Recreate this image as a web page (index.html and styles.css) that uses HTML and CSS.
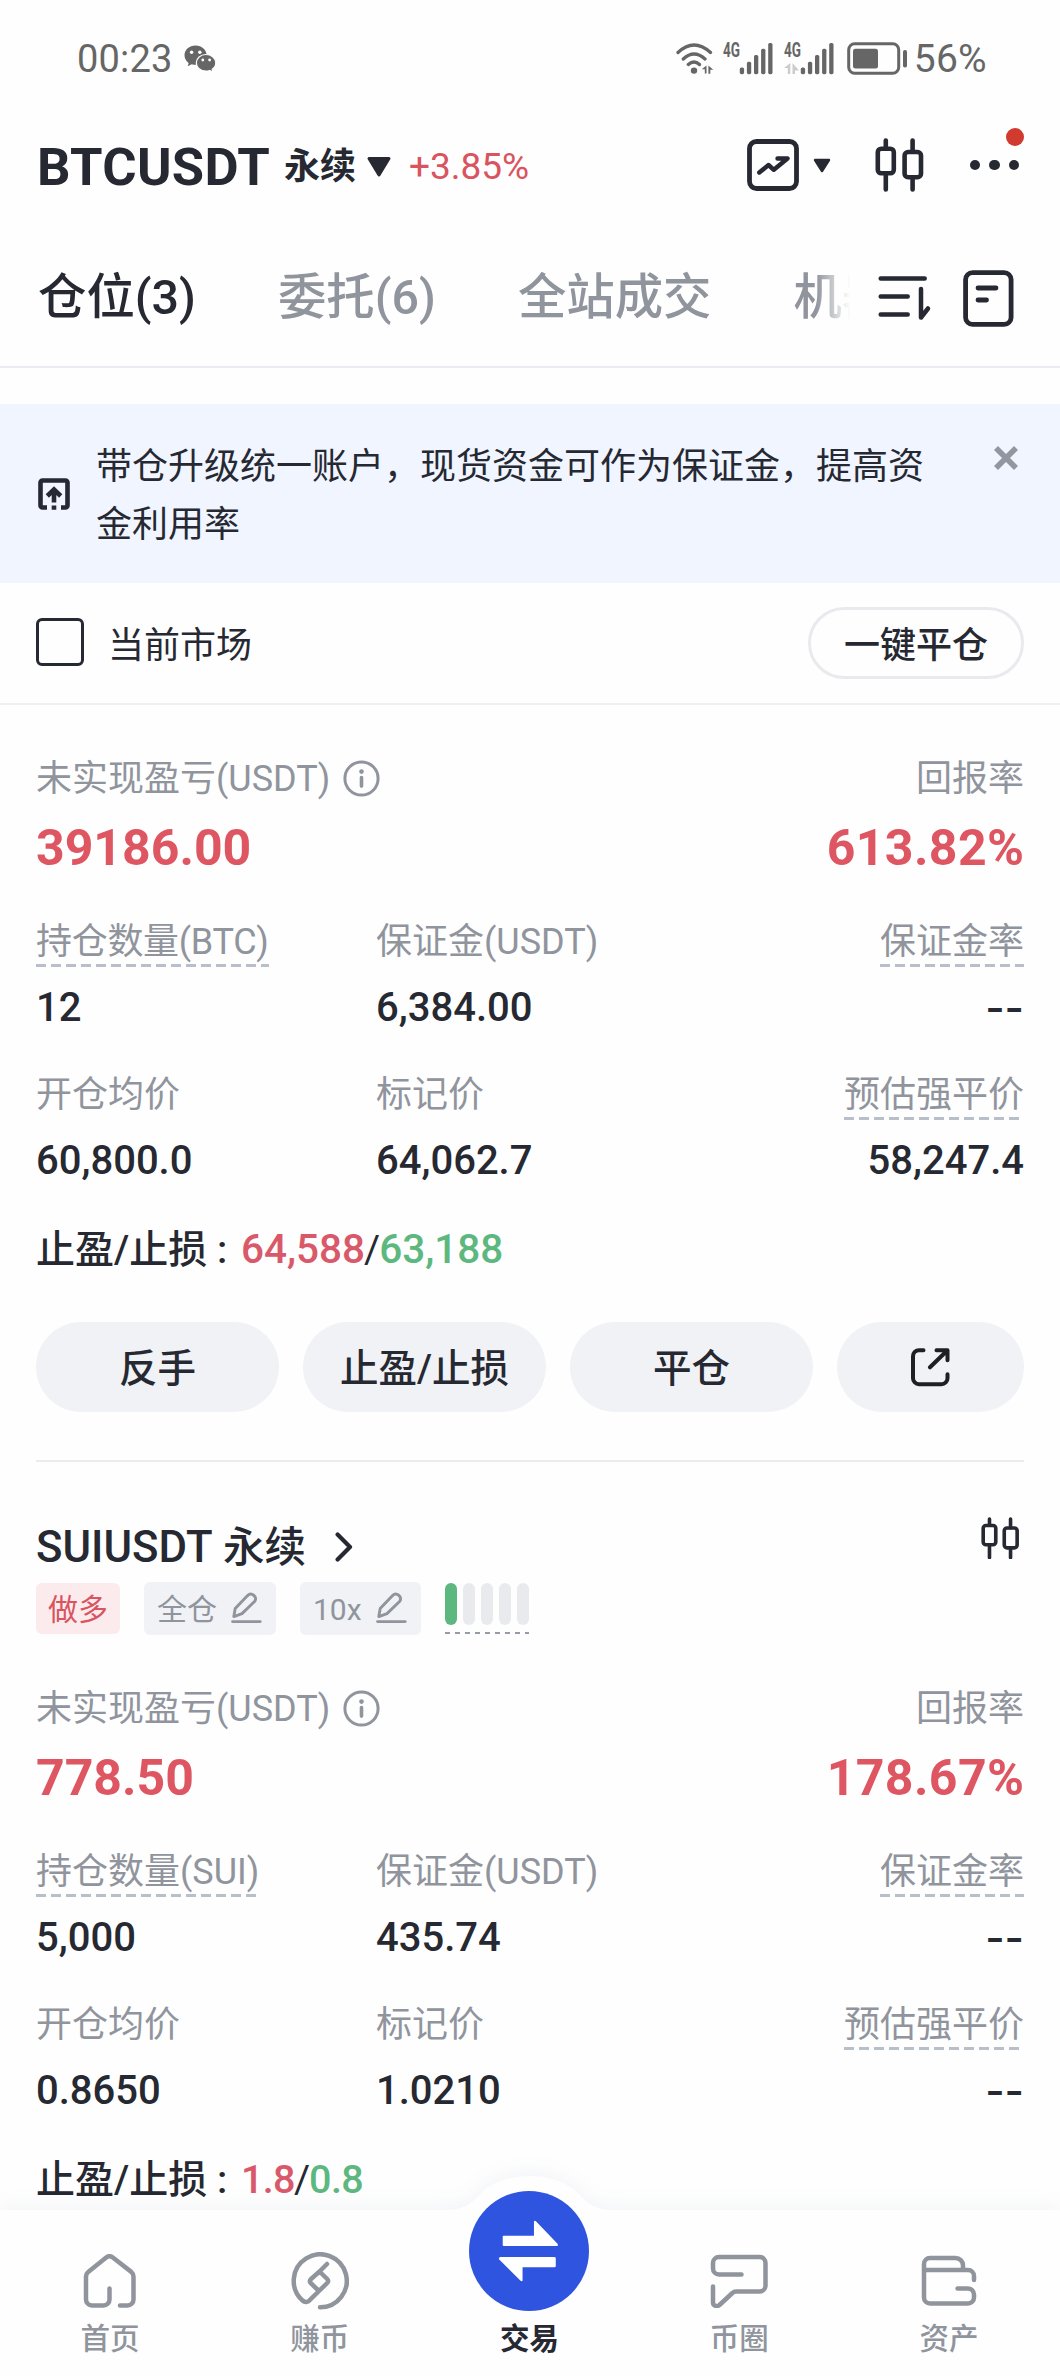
FILE: index.html
```html
<!DOCTYPE html>
<html lang="zh-CN">
<head>
<meta charset="utf-8">
<title>BTCUSDT 永续</title>
<link rel="stylesheet" href="styles.css">
</head>
<body>
<svg class="defs" width="0" height="0">
  <symbol id="candles" viewBox="0 0 49 54">
    <g fill="none" stroke="currentColor" stroke-width="4.6" stroke-linecap="round">
      <rect x="2.8" y="10.7" width="16" height="24.6" rx="3.5"/>
      <path d="M10.8 2.5v8M10.8 35.5v16M37.6 2.5v11M37.6 39.5v12"/>
      <rect x="29.6" y="14" width="16.4" height="25.2" rx="3.5"/>
    </g>
  </symbol>
  <symbol id="info" viewBox="0 0 37 37">
    <circle cx="18.5" cy="18.5" r="16.6" fill="none" stroke="currentColor" stroke-width="3"/>
    <circle cx="18.5" cy="11.6" r="2.3" fill="currentColor"/>
    <path d="M18.5 17.5v8.6" stroke="currentColor" stroke-width="3.6" stroke-linecap="round"/>
  </symbol>
  <symbol id="pencil" viewBox="0 0 31 32">
    <g fill="none" stroke="currentColor" stroke-width="2.9" stroke-linecap="round" stroke-linejoin="round">
      <path d="M2.8 24.6 4.2 16.4 16.6 3.6a4.6 4.6 0 0 1 7.2 5.6L11 21.6z"/>
      <path d="M1.6 29.6h27.6"/>
    </g>
  </symbol>
  <symbol id="bars" viewBox="0 0 51 33">
    <g fill="currentColor">
      <rect x="16.8" y="25.6" width="4.3" height="6.6" rx="1.6"/>
      <rect x="23.9" y="19.8" width="4.3" height="12.4" rx="1.6"/>
      <rect x="31" y="13" width="4.3" height="19.2" rx="1.6"/>
      <rect x="38.1" y="6.7" width="4.3" height="25.5" rx="1.6"/>
      <rect x="45.2" y="1" width="4.3" height="31.2" rx="1.6"/>
    </g>
  </symbol>
</svg>

<div class="screen">
  <div class="status">
    <span class="status-time">00:23</span>
    <svg class="wechat" width="33" height="28" viewBox="0 0 33 28">
      <path fill="#666" d="M11.6.6C5.2.6.5 4.9.5 10.3c0 3.2 1.6 5.9 4.2 7.6L3.7 21.3l4-2.1c1.3.4 2.6.6 3.9.6 6.3 0 11-4.3 11-9.5S17.9.6 11.6.6z"/>
      <path fill="#666" stroke="#fff" stroke-width="1.2" d="M22 9.5c-5.5 0-9.7 3.7-9.7 8.3s4.2 8.3 9.7 8.3c1.2 0 2.5-.2 3.6-.6l3.6 1.8-1-3c2.4-1.5 3.6-3.9 3.6-6.5 0-4.6-4.3-8.3-9.8-8.3z"/>
      <g fill="#fff"><circle cx="7.6" cy="7.2" r="1.7"/><circle cx="15.8" cy="7.2" r="1.7"/><circle cx="18.8" cy="15" r="1.4"/><circle cx="25.6" cy="15" r="1.4"/></g>
    </svg>
    <div class="status-right">
      <svg width="40" height="34" viewBox="0 0 40 34">
        <g fill="none" stroke="#666" stroke-width="3.3" stroke-linecap="round"><path d="M3 10.5Q19 -4.5 35.5 10.5M8.3 17Q19 7 30 17M13.3 22.5Q19 17.3 24.5 22.5"/></g>
        <circle cx="19" cy="28.6" r="3.2" fill="#666"/>
        <path fill="#666" d="M31.5 23.5v8h-1.700v-4.300h-3zM33.400 23.500l4.900 4.300h-3v4h-1.900z"/>
      </svg>
      <svg class="net" width="51" height="33" viewBox="0 0 51 33"><text x="0" y="15" class="net-label" textLength="17" lengthAdjust="spacingAndGlyphs">4G</text><use href="#bars"/></svg>
      <svg class="net" width="51" height="33" viewBox="0 0 51 33"><text x="0" y="15" class="net-label" textLength="17" lengthAdjust="spacingAndGlyphs">4G</text><use href="#bars"/><path fill="#ccc" d="M6.3 21v11H3.8v-6H0zM8.5 21v11H11v-3.5h4z"/></svg>
      <svg class="battery" width="61" height="33" viewBox="0 0 61 33">
        <rect x="1.7" y="1.7" width="50" height="29.6" rx="6" fill="none" stroke="#666" stroke-width="3"/>
        <rect x="6" y="6.7" width="25" height="19.8" rx="2.5" fill="#666"/>
        <rect x="56" y="8" width="4" height="17.5" rx="1.8" fill="#666"/>
      </svg>
      <span class="status-pct">56%</span>
    </div>
  </div>

  <header class="header">
    <h1 class="pair">BTCUSDT</h1>
    <span class="kind">永续</span>
    <svg class="caret" width="26" height="22" viewBox="0 0 26 22"><path d="M3 2.5h20L13 19z" fill="currentColor" stroke="currentColor" stroke-width="3" stroke-linejoin="round"/></svg>
    <span class="change">+3.85%</span>
    <div class="header-icons">
      <svg width="52" height="52" viewBox="0 0 52 52"><g fill="none" stroke="currentColor" stroke-linecap="round" stroke-linejoin="round"><rect x="2.5" y="2.5" width="47" height="47" rx="7" stroke-width="4.8"/><path stroke-width="4.4" d="M12.3 33.5 21.5 26l5.3 4.8L40.5 19.5H30.5"/></g></svg>
      <svg class="caret-sm" width="18" height="16" viewBox="0 0 18 16"><path d="M2 2h14L9 13z" fill="currentColor" stroke="currentColor" stroke-width="2.4" stroke-linejoin="round"/></svg>
      <svg class="candles-lg" width="49" height="54"><use href="#candles"/></svg>
      <span class="more"><i></i><i></i><i></i><b class="badge"></b></span>
    </div>
  </header>

  <div class="tabbar">
    <nav class="tabs">
      <span class="tab active">仓位(3)</span>
      <span class="tab">委托(6)</span>
      <span class="tab">全站成交</span>
      <span class="tab">机器人</span>
    </nav>
    <div class="tab-icons">
      <svg width="54" height="48" viewBox="0 0 54 48"><path d="M2.7 4.5h44M2.7 22.5h27M2.7 40.5h27M43 15v28.5l7-9" fill="none" stroke="currentColor" stroke-width="4.5" stroke-linecap="round" stroke-linejoin="round"/></svg>
      <svg width="51" height="57" viewBox="0 0 51 57"><g fill="none" stroke="currentColor" stroke-width="4.8" stroke-linecap="round"><rect x="2.6" y="2.6" width="45.5" height="51.8" rx="7"/><path d="M15 18h18M15 30h8.5"/></g></svg>
    </div>
  </div>

  <div class="banner">
    <svg class="banner-icon" width="32" height="32" viewBox="0 0 32 32"><g fill="none" stroke="currentColor" stroke-width="4.6"><path d="M9 29.5H4.5a2 2 0 0 1-2-2v-23a2 2 0 0 1 2-2h23a2 2 0 0 1 2 2v23a2 2 0 0 1-2 2H23"/><path d="M9.3 18 16 11.5l6.7 6.5M16 12v12.6M16 27.6v4.2"/></g></svg>
    <p class="banner-text">带仓升级统一账户，现货资金可作为保证金，提高资金利用率</p>
    <svg class="close" width="24" height="24" viewBox="0 0 24 24"><path d="M2 2l20 20M22 2L2 22" stroke="#92969e" stroke-width="5.6"/></svg>
  </div>

  <div class="filter">
    <span class="checkbox"></span>
    <span class="filter-label">当前市场</span>
    <button class="close-all">一键平仓</button>
  </div>

  <main class="positions">
    <section class="position">
      <div class="row head">
        <span class="label">未实现盈亏(USDT)<svg class="info" width="37" height="37"><use href="#info"/></svg></span>
        <span class="label">回报率</span>
      </div>
      <div class="row pnl"><span>39186.00</span><span class="rate">613.82%</span></div>
      <div class="grid">
        <div class="cell"><span class="label hint tight">持仓数量(BTC)</span><span class="value">12</span></div>
        <div class="cell"><span class="label">保证金(USDT)</span><span class="value">6,384.00</span></div>
        <div class="cell"><span class="label hint">保证金率</span><span class="value none">--</span></div>
        <div class="cell"><span class="label">开仓均价</span><span class="value">60,800.0</span></div>
        <div class="cell"><span class="label">标记价</span><span class="value">64,062.7</span></div>
        <div class="cell"><span class="label hint">预估强平价</span><span class="value">58,247.4</span></div>
      </div>
      <div class="tpsl">止盈/止损 : <span class="red">64,588</span><span class="slash">/</span><span class="green">63,188</span></div>
      <div class="actions">
        <button class="action">反手</button>
        <button class="action">止盈/止损</button>
        <button class="action">平仓</button>
        <button class="action share"><svg width="39" height="39" viewBox="0 0 39 39"><g fill="none" stroke="#1f2023" stroke-width="4" stroke-linecap="round" stroke-linejoin="round"><path d="M12.5 2.2H8a6 6 0 0 0-6 6v22a6 6 0 0 0 6 6h22.5a6 6 0 0 0 6-6v-4"/><path d="M25.5 2.2h11v10M36 2.7 19 19.3"/></g></svg></button>
      </div>
    </section>

    <section class="position">
      <div class="title-row">
        <h2 class="name"><span class="symbol">SUIUSDT</span> 永续</h2>
        <svg class="chevron" width="18" height="30" viewBox="0 0 18 30"><path d="M2.6 2.6 15 15 2.6 27.4" fill="none" stroke="currentColor" stroke-width="4.2" stroke-linecap="round" stroke-linejoin="round"/></svg>
        <svg class="candles-sm" width="38.5" height="42.5"><use href="#candles"/></svg>
      </div>
      <div class="tags">
        <span class="tag long">做多</span>
        <span class="tag">全仓<svg width="31" height="32"><use href="#pencil"/></svg></span>
        <span class="tag">10x<svg width="31" height="32"><use href="#pencil"/></svg></span>
        <span class="risk"><i class="on"></i><i></i><i></i><i></i><i></i></span>
      </div>
      <div class="row head">
        <span class="label">未实现盈亏(USDT)<svg class="info" width="37" height="37"><use href="#info"/></svg></span>
        <span class="label">回报率</span>
      </div>
      <div class="row pnl"><span>778.50</span><span class="rate">178.67%</span></div>
      <div class="grid">
        <div class="cell"><span class="label hint">持仓数量(SUI)</span><span class="value">5,000</span></div>
        <div class="cell"><span class="label">保证金(USDT)</span><span class="value">435.74</span></div>
        <div class="cell"><span class="label hint">保证金率</span><span class="value none">--</span></div>
        <div class="cell"><span class="label">开仓均价</span><span class="value">0.8650</span></div>
        <div class="cell"><span class="label">标记价</span><span class="value">1.0210</span></div>
        <div class="cell"><span class="label hint">预估强平价</span><span class="value none">--</span></div>
      </div>
      <div class="tpsl short">止盈/止损 : <span class="red">1.8</span><span class="slash">/</span><span class="green">0.8</span></div>
    </section>
  </main>

  <nav class="bottom">
    <svg class="bottom-bg" width="1060" height="201" viewBox="0 0 1060 201"><path fill="#fefefe" d="M0 35H446C471 35 476 21 487 13 499 5 512 1 529.5 1S560 5 572 13C583 21 588 35 613 35H1060V201H0z"/></svg>
    <a class="item">
      <svg width="54" height="54" viewBox="0 0 54 54"><path d="M37 51.5h7.5a6 6 0 0 0 6-6V22.5a6 6 0 0 0-2.2-4.6L29.5 3.3a5 5 0 0 0-6 0L5.2 17.9A6 6 0 0 0 3 22.5v23a6 6 0 0 0 6 6h11.5a6 6 0 0 0 6-6V34.5"/></svg>
      <span>首页</span>
    </a>
    <a class="item">
      <svg class="coin" width="58" height="58" viewBox="0 0 58 58"><path d="M29 55.3A26.5 26.5 0 1 0 11.5 48.5a5 5 0 0 0 7.200-.3L28 39l8.200-8a3 3 0 0 0 0-4L28.500 19.500 36 12M28.500 19.500 19.800 27.200a3 3 0 0 0 0 4L28 39"/></svg>
      <span>赚币</span>
    </a>
    <a class="item trade">
      <svg class="trade-btn" width="120" height="120" viewBox="0 0 121 121"><circle cx="60.5" cy="60.5" r="60.5" fill="#2f54df"/><path fill="#fff" d="M35 45h30.5V30.5q.8-1 2 0L89.5 53.5V55.5H35q-1 0-1-1v-8.5q0-1 1-1zM31 66.5H86q1.5 0 1.5 1.5v7.5q0 1.5-1.5 1.5H54V90.5q-.8 1-2 0L30 68.5z"/></svg>
      <span>交易</span>
    </a>
    <a class="item">
      <svg width="58" height="54" viewBox="0 0 58 54"><path d="M31.5 20.5H9a6 6 0 0 1-6-6V9a6 6 0 0 1 6-6h40.5a6 6 0 0 1 6 6v22.5a6 6 0 0 1-6 6H26a5 5 0 0 0-3.6 1.5L9.5 51C7 53 3 52 3 48.5V32.5"/></svg>
      <span>币圈</span>
    </a>
    <a class="item">
      <svg width="56" height="54" viewBox="0 0 56 54"><path d="M53 26V22a6 6 0 0 0-6-6H3M42 16V11.5a7.5 7.5 0 0 0-7.5-7.5H9a6 6 0 0 0-6 6v33.5a6 6 0 0 0 6 6h38a6 6 0 0 0 6-6V40.5a6 6 0 0 0-6-6H36.5"/></svg>
      <span>资产</span>
    </a>
  </nav>
</div>
</body>
</html>
```

FILE: styles.css
```css
* { box-sizing: border-box; }

body {
  margin: 0;
  background: #fff;
  color: #262932;
  font-family: Roboto, "Noto Sans CJK SC", sans-serif;
}

h1, h2, p { margin: 0; }
svg { display: block; flex: none; }
.defs { position: absolute; }
button {
  font: inherit;
  color: inherit;
  padding: 0;
  border: 0;
}

.screen {
  width: 1060px;
  height: 2376px;
  display: flex;
  flex-direction: column;
  background: #fefefe;
  overflow: hidden;
}

/* status bar */
.status {
  height: 117px;
  padding: 0 73px 0 77px;
  display: flex;
  align-items: center;
  color: #666;
  font-size: 38px;
  line-height: 44px;
}
.status-time { letter-spacing: 0.2px; }
.status-pct { font-size: 39px; letter-spacing: 0.3px; }
.wechat { margin-left: 11px; }
.status-right { margin-left: auto; display: flex; align-items: center; }
.net { margin-left: 8px; margin-right: 2px; overflow: visible; }
.net-label { font-size: 20px; font-weight: 700; fill: #666; }
.battery { margin: 0 6px 0 10px; }

/* header */
.header {
  height: 96px;
  padding: 0 38px 0 37px;
  display: flex;
  align-items: center;
}
.pair { font-size: 52.5px; font-weight: 700; line-height: 60px; padding-top: 3px; letter-spacing: 0.3px; }
.kind { font-size: 36px; font-weight: 700; line-height: 44px; margin-left: 14px; padding-top: 3px; }
.caret { margin: 4px 0 0 10px; }
.change { font-size: 37px; line-height: 44px; color: #d9545f; margin-left: 17px; padding-top: 3px; }
.header-icons { margin-left: auto; display: flex; align-items: center; }
.caret-sm { margin: 2px 44px 0 14px; }
.more {
  position: relative;
  display: flex;
  gap: 9px;
  margin-left: 46px;
  padding-right: 3px;
}
.more i { width: 10.5px; height: 10.5px; border-radius: 50%; background: #262932; }
.badge {
  position: absolute;
  right: -2px;
  top: -32px;
  width: 18px;
  height: 18px;
  border-radius: 50%;
  background: #d03a2f;
}

/* tabs */
.tabbar {
  height: 155px;
  padding: 17px 46px 0 38px;
  display: flex;
  align-items: center;
  border-bottom: 2px solid #ebecf1;
}
.tabs {
  width: 812px;
  display: flex;
  gap: 82px;
  overflow: hidden;
  white-space: nowrap;
  -webkit-mask-image: linear-gradient(to right, #000 778px, transparent 812px);
  mask-image: linear-gradient(to right, #000 778px, transparent 812px);
}
.tab { font-size: 48.4px; line-height: 64px; font-weight: 500; color: #90949d; flex: none; }
.tab.active { color: #262932; }
.tab-icons { margin-left: auto; display: flex; align-items: center; gap: 31px; }

/* banner */
.banner {
  height: 179px;
  margin-top: 36px;
  padding: 34px 42px 0 38px;
  display: flex;
  align-items: flex-start;
  background: #f0f5ff;
}
.banner-icon { margin-top: 40px; }
.banner-text { width: 830px; margin-left: 26px; font-size: 36px; line-height: 58px; }
.close { margin: 8px 0 0 auto; }

/* filter row */
.filter {
  height: 122px;
  padding: 0 36px;
  display: flex;
  align-items: center;
  border-bottom: 2px solid #eeeff1;
  font-size: 36px;
}
.checkbox { width: 48px; height: 48px; border: 3px solid #262932; border-radius: 6px; margin-bottom: 2px; }
.filter-label { margin-left: 24px; padding-bottom: 2px; }
.close-all {
  margin-left: auto;
  width: 216px;
  height: 72px;
  padding-bottom: 2px;
  border: 3px solid #e9eaee;
  border-radius: 36px;
  background: none;
  font-weight: 500;
}

/* positions */
.positions { flex: 1; min-height: 0; overflow: hidden; padding: 0 36px; }
.position { padding-top: 49px; }
.position + .position { border-top: 2px solid #ebecf0; padding-top: 55px; }
.row { display: flex; justify-content: space-between; }
.label {
  height: 50px;
  font-size: 36px;
  line-height: 51px;
  color: #90949d;
  white-space: nowrap;
}
.label.tight { letter-spacing: -0.3px; }
.head .label { display: flex; align-items: center; padding-top: 1px; }
.info { margin: -3px 0 0 13px; }
.pnl {
  margin-top: 14px;
  font-size: 50px;
  font-weight: 700;
  line-height: 60px;
  color: #de5662;
}
.rate { letter-spacing: 0.4px; margin-right: -0.4px; }
.grid {
  margin-top: 39px;
  display: grid;
  grid-template-columns: 340px 1fr auto;
  row-gap: 38px;
}
.cell { display: flex; flex-direction: column; align-items: flex-start; }
.cell:nth-child(3n) { align-items: flex-end; }
.hint {
  background: repeating-linear-gradient(to right, #b9bfca 0 10px, transparent 10px 15px) left bottom / 100% 3px no-repeat;
}
.value { margin-top: 17px; font-size: 40px; line-height: 48px; font-weight: 500; }
.value.none { font-family: Inter, sans-serif; font-size: 42px; }
.tpsl { margin-top: 39px; height: 50px; font-size: 39px; line-height: 51px; font-weight: 500; }
.red, .green { font-size: 40.5px; }
.red { color: #d9596a; margin-left: 4px; }
.green { color: #5cb87f; }
.slash { font-weight: 400; margin: 0 -1px; }
.short .red, .short .green { font-size: 39.5px; letter-spacing: -0.6px; }

.actions { margin: 48px 0; display: flex; gap: 24px; }
.action {
  width: 243px;
  height: 90px;
  padding-bottom: 4px;
  border-radius: 45px;
  background: #f1f2f6;
  font-size: 38.5px;
  font-weight: 500;
  display: flex;
  align-items: center;
  justify-content: center;
}
.action.share { flex: 1; width: auto; padding: 0; }

.title-row { display: flex; align-items: center; height: 60px; }
.name { font-size: 41.5px; font-weight: 500; line-height: 60px; }
.symbol { font-size: 43.7px; }
.chevron { margin-left: 29px; }
.candles-sm { margin: 0 5px 18px auto; }
.tags { margin: 5px 0 49px; height: 53px; display: flex; align-items: center; gap: 24px; }
.tag {
  height: 53px;
  padding: 0 14px 0 13px;
  border-radius: 6px;
  background: #f1f2f6;
  color: #90949d;
  font-size: 30px;
  line-height: 55px;
  display: flex;
}
.tag svg { margin: 10px 0 0 14px; }
.tag.long { height: 51px; padding: 0 12px; line-height: 53px; background: #fcebed; color: #d9545f; }
.risk {
  display: flex;
  gap: 6px;
  height: 51px;
  background: repeating-linear-gradient(to right, #969ba6 0 5px, transparent 5px 10px) left bottom / 100% 2px no-repeat;
}
.risk i { width: 12px; height: 42px; border-radius: 6px; background: #e9eaee; }
.risk i.on { background: #5cb87f; }

/* bottom navigation */
.bottom {
  position: relative;
  height: 166px;
  padding: 0 6px 0 5px;
  display: flex;
}
.bottom-bg {
  position: absolute;
  left: 0;
  top: -35px;
  filter: drop-shadow(0 -4px 9px rgba(60, 80, 140, 0.06));
}
.item {
  position: relative;
  flex: 1;
  padding-top: 42px;
  display: flex;
  flex-direction: column;
  align-items: center;
  color: #90949d;
  font-size: 29.5px;
  font-weight: 500;
  line-height: 36px;
}
.item > svg {
  margin-top: 1.5px;
  fill: none;
  stroke: currentColor;
  stroke-width: 4.5;
  stroke-linecap: round;
  stroke-linejoin: round;
}
.item > span { margin-top: auto; margin-bottom: 19px; }
.item > .coin { margin-top: 0; }
.item > .trade-btn { stroke: none; margin-top: -61px; }
.trade { color: #262932; font-weight: 700; }
```
